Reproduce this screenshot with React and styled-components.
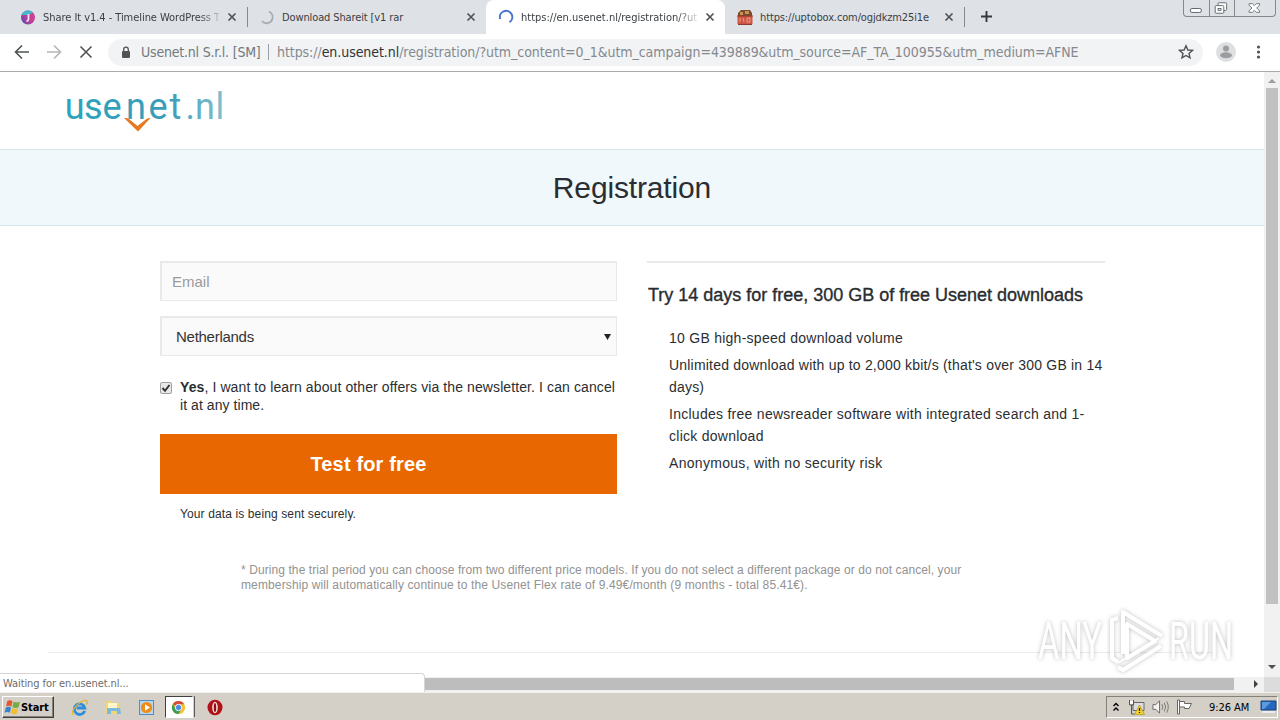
import React from 'react'
import styled, { createGlobalStyle } from 'styled-components'

const GlobalStyle = createGlobalStyle`
    * {
        box-sizing: border-box;
    }

    body {
        margin: 0;
        overflow: hidden;
        background: #fff;
        font-family: "Liberation Sans", Arial, sans-serif;
    }

    h1, h2, p, ul {
        margin: 0;
        padding: 0;
        font-weight: 400;
    }
`

const uiFont = '"DejaVu Sans Condensed", "DejaVu Sans", sans-serif'

const Screen = styled.div`
    position: relative;
    display: flex;
    flex-direction: column;
    width: 1280px;
    height: 720px;
    overflow: hidden;
`

/* tabs */

const TabStrip = styled.div`
    display: flex;
    position: relative;
    height: 34px;
    padding-left: 8px;
    background: #dee1e6;
`

const TabBox = styled.div`
    display: flex;
    align-items: center;
    position: relative;
    width: 239px;
    height: 34px;
    padding: 0 10px 0 12px;
    border-radius: 8px 8px 0 0;
    background: ${props => props.$active ? '#fff' : 'transparent'};

    .favicon {
        flex: none;
        width: 16px;
        height: 16px;
        margin-right: 7px;
    }

    .close {
        flex: none;
        width: 10px;
        height: 10px;
    }

    &::after {
        content: "";
        position: absolute;
        right: -1px;
        top: 7px;
        width: 1px;
        height: 20px;
        background: ${props => props.$divider ? '#85888d' : 'transparent'};
    }
`

const TabTitle = styled.span`
    flex: 1;
    min-width: 0;
    margin-right: 8px;
    white-space: nowrap;
    font-family: ${uiFont};
    font-size: 11px;
    line-height: 16px;
    padding-top: 1px;
    letter-spacing: ${props => props.$spacing || 0}px;
    color: #3c4043;
    mask-image: ${props => props.$fade ? 'linear-gradient(to right, #000 calc(100% - 20px), rgba(0, 0, 0, 0.2))' : 'none'};
`

const NewTab = styled.svg`
    width: 13px;
    height: 13px;
    margin: 10px 0 0 16px;
`

const WindowButtons = styled.div`
    display: flex;
    position: absolute;
    right: 4px;
    top: 0;
    width: 93px;
    height: 17px;
    border: 1px solid #85888e;
    border-top: 0;
    border-radius: 0 0 4px 4px;

    svg {
        display: block;
        height: 16px;
    }

    svg + svg {
        border-left: 1px solid #85888e;
    }
`

/* toolbar */

const Toolbar = styled.div`
    display: flex;
    align-items: center;
    height: 38px;
    padding: 0 0 1px 14px;
    border-bottom: 1px solid #a9aaac;
    background: #fff;

    > svg {
        flex: none;
    }
`

const NavIcon = styled.svg`
    width: 16px;
    height: 16px;
    margin-right: 16px;
    fill: none;
    stroke: ${props => props.$muted ? '#b4b6b8' : '#505356'};
    stroke-width: 1.6;
`

const AddressBar = styled.div`
    display: flex;
    flex: none;
    align-items: center;
    width: 1095px;
    height: 27px;
    margin: 0 12px 0 -2px;
    padding: 0 9px 0 13px;
    border-radius: 14px;
    background: #f1f3f4;
    font-family: ${uiFont};
    font-size: 14px;
    white-space: pre;
    color: #85898e;

    .lock {
        width: 10px;
        height: 13px;
        margin-right: 10px;
    }

    .star {
        margin-left: auto;
    }
`

const Owner = styled.span`
    width: 120px;
    letter-spacing: ${props => props.$spacing}px;
    color: #74787d;
`

const Separator = styled.i`
    width: 1px;
    height: 16px;
    margin: 0 8px 0 7px;
    background: #9a9da1;
`

const Url = styled.span`
    letter-spacing: ${props => props.$spacing}px;

    b {
        font-weight: 400;
        color: #303236;
    }
`

/* page */

const Viewport = styled.div`
    display: grid;
    grid-template-columns: 1264px 16px;
    grid-template-rows: 605px 15px;
    height: 620px;
`

const Page = styled.div`
    overflow: hidden;
    background: #fff;
    color: #2b2e31;
`

const SiteHeader = styled.div`
    height: 77px;
    padding: 16px 0 0 64px;

    svg {
        display: block;
    }
`

const TitleBand = styled.div`
    height: 77px;
    border-top: 1px solid #d3e6ea;
    border-bottom: 1px solid #d3e6ea;
    background: #f0f8fb;
    text-align: center;

    h1 {
        font-size: 30px;
        line-height: 75px;
        letter-spacing: ${props => props.$spacing}px;
    }
`

const Columns = styled.div`
    display: grid;
    grid-template-columns: 457px 458px;
    column-gap: 30px;
    height: 302px;
    padding: 35px 0 0 160px;
`

const Field = styled.div`
    display: flex;
    align-items: center;
    justify-content: space-between;
    height: 40px;
    margin-bottom: 15px;
    padding: 0 4px 0 ${props => props.$select ? 14 : 10}px;
    border: 1px solid #e9e9e9;
    border-top-width: 2px;
    border-left-width: 2px;
    background: #fafafa;
    font-size: 15px;
    letter-spacing: ${props => props.$spacing || 0}px;
    color: ${props => props.$select ? '#333' : '#9a9a9a'};
`

const Newsletter = styled.label`
    display: flex;
    gap: 8px;
    margin-top: 22px;
    font-size: 14px;
    line-height: 18px;

    svg {
        flex: none;
        margin-top: 4px;
    }
`

const Line = styled.span`
    display: block;
    white-space: nowrap;
    letter-spacing: ${props => props.$spacing || 0}px;
`

const SubmitButton = styled.button`
    display: block;
    width: 457px;
    height: 60px;
    margin-top: 20px;
    padding: 0 40px 0 0;
    border: 0;
    background: #e96700;
    color: #fff;
    font: bold 20px "Liberation Sans", Arial, sans-serif;
    letter-spacing: 0.15px;
`

const SecureNote = styled.p`
    margin: 12px 0 0 20px;
    font-size: 12px;
    line-height: 16px;
    letter-spacing: ${props => props.$spacing}px;
`

const Offer = styled.div`
    border-top: 2px solid #e9e9e9;

    h2 {
        margin: 20px 0 0 1px;
        font-size: 18px;
        line-height: 24px;
        white-space: nowrap;
        letter-spacing: ${props => props.$spacing}px;
        -webkit-text-stroke: 0.35px #25282b;
    }

    ul {
        margin: 20px 0 0 22px;
        list-style: none;
        font-size: 14px;
        line-height: 22px;
    }

    li {
        margin-bottom: 5px;
    }
`

const Footnote = styled.p`
    height: 124px;
    margin-left: 241px;
    padding-top: 35px;
    font-size: 12px;
    line-height: 15px;
    color: #929292;
`

const Rule = styled.div`
    width: 1168px;
    height: 1px;
    margin-left: 48px;
    background: #ececec;
`

/* scrollbars */

const VerticalBar = styled.div`
    display: flex;
    flex-direction: column;
    justify-content: space-between;
    align-items: center;
    background: #f1f1f1;
`

const VerticalThumb = styled.div`
    width: 12px;
    height: 516px;
    margin-bottom: 57px;
    background: #c1c1c1;
`

const HorizontalBar = styled.div`
    display: flex;
    align-items: center;
    justify-content: space-between;
    background: #f1f1f1;
`

const HorizontalThumb = styled.div`
    width: 1218px;
    height: 12px;
    margin: 0 0 1px 16px;
    background: #bdbdbd;
`

const Corner = styled.div`
    background: #dcdcdc;
`

const StatusBubble = styled.div`
    position: absolute;
    left: 0;
    top: 673px;
    width: 425px;
    height: 19px;
    padding-left: 3px;
    border: 1px solid #d5d5d5;
    border-left: 0;
    border-bottom: 0;
    border-radius: 0 4px 0 0;
    background: #fff;
    font-family: ${uiFont};
    font-size: 11px;
    line-height: 19px;
    letter-spacing: ${props => props.$spacing}px;
    color: #6d6d6d;
`

const Watermark = styled.svg`
    position: absolute;
    left: 1030px;
    top: 602px;
    filter: drop-shadow(0 0 2px rgba(0, 0, 0, 0.26));
`

/* taskbar */

const Taskbar = styled.div`
    display: flex;
    align-items: center;
    height: 28px;
    padding: 1px 2px 0 2px;
    border-top: 1px solid #f4f2ee;
    background: #d4cfc7;
    font-family: ${uiFont};
    font-size: 11px;
    color: #000;
`

const StartButton = styled.div`
    display: flex;
    align-items: center;
    width: 52px;
    height: 22px;
    padding-left: 1px;
    border: 1px solid;
    border-color: #fff #404040 #404040 #fff;
    box-shadow: inset -1px -1px 0 #85827c;
    font-weight: bold;
    letter-spacing: -0.1px;

    svg {
        flex: none;
    }
`

const Launcher = styled.div`
    display: flex;
    align-items: center;
    justify-content: center;
    width: ${props => props.$active ? 28 : 33.5}px;
    height: 22px;
    margin: ${props => props.$active ? '0 6px 0 1px' : 0};
    border: ${props => props.$active ? '1px solid' : 0};
    border-color: #404040 #fff #fff #404040;
    background: ${props => props.$active ? '#fff' : 'transparent'};
`

const Launchers = styled.div`
    display: flex;
    margin-left: 9px;
`

const Edge = styled.i`
    width: 1px;
    height: 21px;
    margin: 0 4px 0 -5px;
    background: #5d5a55;
`

const Tray = styled.div`
    display: flex;
    align-items: center;
    width: 172px;
    height: 22px;
    margin-left: auto;
    border: 1px solid;
    border-color: #85827c #fff #fff #85827c;

    svg {
        flex: none;
    }
`

const TrayGroup = styled.div`
    display: flex;
    align-items: center;
    gap: 7px;
    padding-left: 5px;

    svg:first-child {
        margin-right: 1px;
    }
`

const Clock = styled.span`
    width: 41px;
    margin: 0 10px 0 16px;
    white-space: nowrap;
    letter-spacing: ${props => props.$spacing}px;
`

const CloseIcon = () => (
    <svg className="close" viewBox="0 0 10 10">
        <path d="M1.5 1.5l7 7M8.5 1.5l-7 7" stroke="#505459" strokeWidth="1.7" />
    </svg>
)

const Tab = ({ title, icon, active, divider, spacing, fade }) => (
    <TabBox $active={active} $divider={divider}>
        {icon}
        <TabTitle $spacing={spacing} $fade={fade}>{title}</TabTitle>
        <CloseIcon />
    </TabBox>
)

const ShareIcon = () => (
    <svg className="favicon" viewBox="0 0 16 16">
        <defs>
            <linearGradient id="share" x1="0" y1="0.8" x2="1" y2="0.1">
                <stop offset="0" stopColor="#5b4bb8" />
                <stop offset="0.5" stopColor="#c43d94" />
                <stop offset="1" stopColor="#d0479a" />
            </linearGradient>
        </defs>
        <circle cx="8" cy="8.5" r="7" fill="url(#share)" />
        <path d="M1.5 6A7 7 0 0 1 13 3.5L9 6z" fill="#45b9cb" />
        <path d="M8.5 5v5.5a2 2 0 0 1-2 1.5" fill="none" stroke="#f7dcee" strokeWidth="1.8" />
    </svg>
)

const IdleSpinner = () => (
    <svg className="favicon" viewBox="0 0 16 16">
        <path d="M10 2.6A6 6 0 0 1 13.5 9.5A6 6 0 0 1 3 12" fill="none" stroke="#a9acb1" strokeWidth="1.8" />
    </svg>
)

const ActiveSpinner = () => (
    <svg className="favicon" viewBox="0 0 16 16">
        <path d="M2.2 10A6.2 6.2 0 1 1 11.5 13.2" fill="none" stroke="#4974d2" strokeWidth="2" />
    </svg>
)

const BoxIcon = () => (
    <svg className="favicon" viewBox="0 0 16 16">
        <path d="M1 4l3-3h9l2 3v3H1z" fill="#7c4b2f" />
        <path d="M3 3h3v3H3zM8 2h4v3H8z" fill="#c69655" />
        <path d="M0.5 7h15v8h-15z" fill="#cf5443" />
        <path d="M3 9v4M6 9l1 4M10 9v4h3V9z" stroke="#e5a08a" fill="none" />
        <path d="M0 7h16M1 15.5h14" stroke="#8b3b2a" />
    </svg>
)

// each letter of the wordmark sits on its own x
const Logo = () => (
    <svg width="164" height="46" viewBox="0 0 164 46">
        <defs>
            <linearGradient id="logo" gradientUnits="userSpaceOnUse" x1="0" x2="160" y1="0" y2="0">
                <stop offset="0" stopColor="#2aa4bc" />
                <stop offset="0.65" stopColor="#3a9cb8" />
                <stop offset="1" stopColor="#84bfcf" />
            </linearGradient>
        </defs>
        <text
            x="0.8 20 38.5 62 84.5 105.5 121.5 131 151.5"
            y="31"
            fill="url(#logo)"
            fontFamily="Roboto, sans-serif"
            fontSize="36"
        >usenet.nl</text>
        <path d="M60 30q3-.5 5 1l8.5 7 9-7q2-1.500 4-1L74 43.5z" fill="#e87722" />
    </svg>
)

const features = [
    [['10 GB high-speed download volume', 0.26]],
    [['Unlimited download with up to 2,000 kbit/s (that\'s over 300 GB in 14', 0.2], ['days)', 0.2]],
    [['Includes free newsreader software with integrated search and 1-', 0.27], ['click download', 0.26]],
    [['Anonymous, with no security risk', 0.3]],
]

const TaskbarIcons = () => (
    <Launchers>
        <Launcher>
            <svg width="17" height="17" viewBox="0 0 18 18">
                <path d="M14.5 12.5A5.6 5.6 0 1 1 14.6 9.5H6" fill="none" stroke="#2f8fdc" strokeWidth="3" />
                <path d="M2 16.5C-1 12 12-1 17 2c1 1 0 3-1 4" fill="none" stroke="#e5b62e" strokeWidth="1.3" />
            </svg>
        </Launcher>
        <Launcher>
            <svg width="17" height="17" viewBox="0 0 17 17">
                <path d="M1 2h6l1 2h6v11H1z" fill="#efd67a" />
                <path d="M3 4h9v5H3z" fill="#fff6ca" />
                <path d="M2 9h13l1 6h-4v-3H6v3H2z" fill="#7db9df" />
            </svg>
        </Launcher>
        <Launcher>
            <svg width="17" height="17" viewBox="0 0 17 17">
                <rect x="1.5" y="1.5" width="14" height="14" fill="#b9d6ec" stroke="#4d8fc5" />
                <circle cx="8.5" cy="8.5" r="5.6" fill="#ef8c17" />
                <path d="M7 5.3l5 3.2-5 3.2z" fill="#fff" />
            </svg>
        </Launcher>
        <Launcher $active>
            <svg width="15" height="15" viewBox="0 0 16 16">
                <circle cx="8" cy="8" r="7" fill="#f4c22b" />
                <path d="M8 8L1.9 4.5A7 7 0 0 1 14 4.5H8z" fill="#d84a38" />
                <path d="M1.9 4.5A7 7 0 0 0 8 15l3-5-3-2-3 1z" fill="#3b9c53" />
                <circle cx="8" cy="8" r="3.4" fill="#4e88e5" stroke="#fff" />
            </svg>
        </Launcher>
        <Edge />
        <Launcher>
            <svg width="16" height="17" viewBox="0 0 16 17">
                <ellipse cx="8" cy="8.5" rx="7.5" ry="7.8" fill="#b11218" />
                <ellipse cx="8" cy="8.5" rx="2.8" ry="5.8" fill="#f5dedb" />
                <ellipse cx="8" cy="8.5" rx="1.2" ry="4.5" fill="#8c1115" />
            </svg>
        </Launcher>
    </Launchers>
)

const TrayIcons = () => (
    <TrayGroup>
        <svg width="8" height="10" viewBox="0 0 8 10">
            <path d="M1.5 4L4 1.5 6.5 4M1.5 8.5L4 6l2.5 2.5" fill="none" stroke="#000" strokeWidth="1.4" />
        </svg>
        <svg width="17" height="17" viewBox="0 0 17 17">
            <path d="M5 3.5h11v8H5z" fill="#ddd" stroke="#666" />
            <path d="M1.5 1v5h4V1M3.5 6v9h3" fill="none" stroke="#555" />
            <path d="M2 2h3v3H2z" fill="#fff" />
            <path d="M11.5 6l5 9.5h-10z" fill="#f4d22e" stroke="#a58a13" strokeWidth="0.6" />
            <path d="M11.5 9v3M11.5 13v1" stroke="#222" strokeWidth="1.3" />
        </svg>
        <svg width="17" height="16" viewBox="0 0 18 16">
            <path d="M1 5.5h3L8 1.5v13l-4-4H1z" fill="#f5f5f5" stroke="#666" />
            <path d="M10.5 5q2 3 0 6M13 3.5q3 4.5 0 9M15.5 2q3.5 6 0 12" fill="none" stroke="#777" />
        </svg>
        <svg width="17" height="16" viewBox="0 0 17 16">
            <path d="M1.5 1v14h2V1z" fill="#fff" stroke="#666" />
            <path d="M3.5 2.5h5v2h7l-2.500 5H8.5V8h-5z" fill="#fff" stroke="#666" />
        </svg>
    </TrayGroup>
)

const App = () => {
    return (
        <Screen>
            <GlobalStyle />
            <TabStrip>
                <Tab title="Share It v1.4 - Timeline WordPress T" icon={<ShareIcon />} spacing={-0.05} divider fade />
                <Tab title="Download Shareit [v1 rar" icon={<IdleSpinner />} spacing={-0.12} />
                <Tab title="https://en.usenet.nl/registration/?ut" icon={<ActiveSpinner />} spacing={0} active fade />
                <Tab title="https://uptobox.com/ogjdkzm25i1e" icon={<BoxIcon />} spacing={-0.13} divider />
                <NewTab viewBox="0 0 13 13">
                    <path d="M6.5 1v11M1 6.5h11" stroke="#35383c" strokeWidth="1.9" />
                </NewTab>
                <WindowButtons>
                    <svg width="25" viewBox="0 0 25 16">
                        <rect x="6.5" y="8.5" width="11" height="4" rx="1.5" fill="#fff" stroke="#62666d" />
                    </svg>
                    <svg width="26" viewBox="0 0 26 16">
                        <rect x="8.5" y="2.5" width="9" height="8" rx="1" fill="#fff" stroke="#62666d" />
                        <rect x="5.5" y="5.5" width="9" height="8" rx="1" fill="#fff" stroke="#62666d" />
                        <rect x="8.5" y="8.5" width="3" height="2" fill="none" stroke="#62666d" />
                    </svg>
                    <svg width="41" viewBox="0 0 41 16">
                        <path d="M14.5 3.5h3.5l2 2 2-2h3.5V5l-3 3 3 3v1.5H22l-2-2-2 2h-3.5V11l3-3-3-3z" fill="#fff" stroke="#74777d" />
                    </svg>
                </WindowButtons>
            </TabStrip>

            <Toolbar>
                <NavIcon viewBox="0 0 16 16"><path d="M15 8H2M8 1.5L1.5 8 8 14.5" /></NavIcon>
                <NavIcon viewBox="0 0 16 16" $muted><path d="M1 8h13M8 1.5L14.5 8 8 14.5" /></NavIcon>
                <NavIcon viewBox="0 0 16 16"><path d="M2.5 2.5l11 11M13.5 2.5l-11 11" /></NavIcon>
                <AddressBar>
                    <svg className="lock" viewBox="0 0 10 13">
                        <rect x="1" y="5" width="8" height="7" rx="1" fill="#505356" />
                        <path d="M2.7 5V3.5a2.3 2.3 0 0 1 4.6 0V5" fill="none" stroke="#505356" strokeWidth="1.3" />
                    </svg>
                    <Owner $spacing={-0.2}>Usenet.nl S.r.l. [SM]</Owner>
                    <Separator />
                    <Url $spacing={-0.06}>https://<b>en.usenet.nl</b>/registration/?utm_content=0_1&amp;utm_campaign=439889&amp;utm_source=AF_TA_100955&amp;utm_medium=AFNE</Url>
                    <svg className="star" width="16" height="16" viewBox="0 0 16 16">
                        <path d="M8 1.8l1.9 4.2 4.5.4-3.4 3 1 4.5L8 11.5l-4 2.4 1-4.5-3.4-3 4.5-.4z" fill="none" stroke="#505356" strokeWidth="1.4" />
                    </svg>
                </AddressBar>
                <svg width="22" height="22" viewBox="0 0 22 22">
                    <circle cx="11" cy="11" r="10" fill="#dedfe1" />
                    <circle cx="11" cy="7.5" r="3" fill="#9b9da0" />
                    <path d="M5 15c0-5 12-5 12 0-3 3-9 3-12 0z" fill="#9b9da0" />
                </svg>
                <svg width="42" height="16" viewBox="0 0 42 16">
                    <g fill="#505356">
                        <circle cx="21.5" cy="3" r="1.6" />
                        <circle cx="21.5" cy="8" r="1.6" />
                        <circle cx="21.5" cy="13" r="1.6" />
                    </g>
                </svg>
            </Toolbar>

            <Viewport>
                <Page>
                    <SiteHeader><Logo /></SiteHeader>
                    <TitleBand $spacing={-0.15}><h1>Registration</h1></TitleBand>
                    <Columns>
                        <div>
                            <Field>Email</Field>
                            <Field $select $spacing={-0.27}>
                                Netherlands
                                <svg width="9" height="8" viewBox="0 0 9 8"><path d="M1 1h7L4.5 7z" fill="#222" /></svg>
                            </Field>
                            <Newsletter>
                                <svg width="12" height="12" viewBox="0 0 12 12">
                                    <rect x="0.5" y="0.5" width="11" height="11" rx="1.5" fill="#e8e8e8" stroke="#a0a0a0" />
                                    <path d="M2.5 6l2.5 2.8L9.5 3" fill="none" stroke="#333" strokeWidth="2" />
                                </svg>
                                <div>
                                    <Line $spacing={0.1}><b>Yes</b>, I want to learn about other offers via the newsletter. I can cancel</Line>
                                    <Line $spacing={0.06}>it at any time.</Line>
                                </div>
                            </Newsletter>
                            <SubmitButton>Test for free</SubmitButton>
                            <SecureNote $spacing={0.12}>Your data is being sent securely.</SecureNote>
                        </div>
                        <Offer $spacing={-0.01}>
                            <h2>Try 14 days for free, 300 GB of free Usenet downloads</h2>
                            <ul>
                                {features.map((lines, i) => (
                                    <li key={i}>
                                        {lines.map(([text, spacing]) => <Line key={text} $spacing={spacing}>{text}</Line>)}
                                    </li>
                                ))}
                            </ul>
                        </Offer>
                    </Columns>
                    <Footnote>
                        <Line $spacing={0.085}>* During the trial period you can choose from two different price models. If you do not select a different package or do not cancel, your</Line>
                        <Line $spacing={0.125}>membership will automatically continue to the Usenet Flex rate of 9.49€/month (9 months - total 85.41€).</Line>
                    </Footnote>
                    <Rule />
                </Page>
                <VerticalBar>
                    <svg width="16" height="16" viewBox="0 0 16 16"><path d="M4 11h8L8 7z" fill="#9b9b9b" /></svg>
                    <VerticalThumb />
                    <svg width="16" height="16" viewBox="0 0 16 16"><path d="M4 4h8l-4 4z" fill="#505050" /></svg>
                </VerticalBar>
                <HorizontalBar>
                    <HorizontalThumb />
                    <svg width="16" height="15" viewBox="0 0 16 15"><path d="M6 3v8l4-4z" fill="#404040" /></svg>
                </HorizontalBar>
                <Corner />
            </Viewport>

            <Taskbar>
                <StartButton>
                    <svg width="17" height="17" viewBox="0 0 16 16">
                        <path d="M3 2q2.5-1.500 5 0L7 7Q4.5 5.5 2 7z" fill="#e5582b" />
                        <path d="M9 2.5q3 1.5 6 0L13.5 8q-3 1-5.500-.5z" fill="#72ad42" />
                        <path d="M1.7 8q2.5-1.500 5 0l-1.2 5Q3 11.5.5 13z" fill="#3b83cc" />
                        <path d="M7.7 8.5q2.5 1.5 5.5.5l-1.5 5q-3 1-5.3-.5z" fill="#efbf31" />
                    </svg>
                    Start
                </StartButton>
                <TaskbarIcons />
                <Tray>
                    <TrayIcons />
                    <Clock $spacing={-0.05}>9:26 AM</Clock>
                    <svg width="17" height="14" viewBox="0 0 17 14">
                        <path d="M1 1h15v9H1z" fill="#2467bd" stroke="#17427a" />
                        <path d="M2 2h9L4 9H2z" fill="#5a9be0" />
                        <path d="M2 12h13" stroke="#e8edf3" strokeWidth="2" />
                    </svg>
                </Tray>
            </Taskbar>

            <StatusBubble $spacing={-0.08}>Waiting for en.usenet.nl...</StatusBubble>
            <Watermark width="212" height="78" viewBox="0 0 212 78">
                <g fill="#fff" fontFamily="Roboto, sans-serif" fontSize="51">
                    <text x="8" y="57" textLength="64" lengthAdjust="spacingAndGlyphs">ANY</text>
                    <text x="139" y="57" textLength="64" lengthAdjust="spacingAndGlyphs">RUN</text>
                </g>
                <g fill="none" stroke="#fff" strokeWidth="4" strokeLinejoin="round">
                    <path d="M88 16l-6 2v38l6 4" />
                    <path d="M93 52V10l39 24" />
                    <path d="M97 22l28 17-28 17z" />
                    <path d="M88 65l5 3 38-24" />
                    <path d="M88 61l41-25" strokeWidth="2" />
                </g>
            </Watermark>
        </Screen>
    )
}

export default App
